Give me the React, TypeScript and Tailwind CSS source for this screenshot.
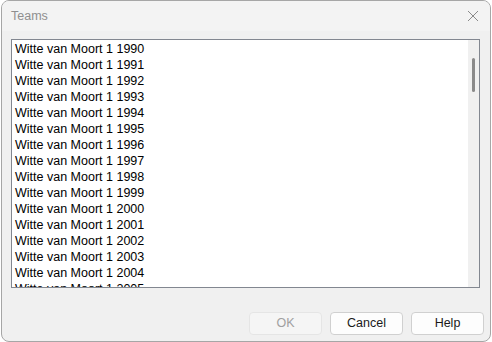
import React from "react"

const years = Array.from({ length: 16 }, (_, i) => 1990 + i)

const font = { fontFamily: '"Liberation Sans", Arial, sans-serif' }

export default function App() {
	return (
		<div className="w-[492px] h-[342px] bg-white flex pl-[1px]" style={font}>
			<div className="w-[490px] h-[342px] rounded-[8px] border border-[#a6a6a6] bg-[#f0f0f0] overflow-hidden flex flex-col">
				{/* title bar */}
				<div className="h-[30px] bg-[#f3f3f3] flex items-center justify-between pl-[9px] pr-[10px]">
					<span className="text-[12.5px] text-[#8f8f8f]">Teams</span>
					<svg width="12" height="12" viewBox="0 0 12 12" className="mr-[1px]">
						<path d="M1 1 L11 11 M11 1 L1 11" stroke="#8a8a8a" strokeWidth="1" />
					</svg>
				</div>
				{/* list */}
				<div className="mt-[8px] ml-[9px] mr-[10px] h-[249px] border border-[#828790] bg-white flex overflow-hidden">
					<div className="flex-1 pt-[1px] pl-[3px] overflow-hidden">
						{years.map((y) => (
							<div key={y} className="h-[16px] leading-[16px] text-[12.5px] text-[#000] whitespace-nowrap">
								Witte van Moort 1 {y}
							</div>
						))}
					</div>
					<div className="w-[11px] bg-[#f0f0f0] flex justify-center pt-[18px]">
						<div className="w-[3px] h-[34px] rounded-full bg-[#8a8a8a]" />
					</div>
				</div>
				{/* buttons */}
				<div className="mt-[24px] flex justify-end gap-[8px] pr-[6px]">
					<button className="w-[73px] h-[23px] rounded-[4px] border border-[#e5e5e5] bg-[#f5f5f5] text-[12.5px] text-[#a0a0a0]">OK</button>
					<button className="w-[73px] h-[23px] rounded-[4px] border border-[#d0d0d0] bg-[#fdfdfd] text-[12.5px] text-[#1a1a1a]">Cancel</button>
					<button className="w-[73px] h-[23px] rounded-[4px] border border-[#d0d0d0] bg-[#fdfdfd] text-[12.5px] text-[#1a1a1a]">Help</button>
				</div>
			</div>
		</div>
	)
}
